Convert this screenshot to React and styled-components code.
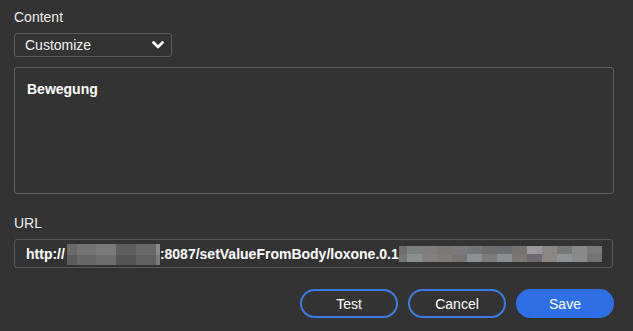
import React from "react";
import styled, { createGlobalStyle } from "styled-components";

const Global = createGlobalStyle`
  html, body { margin: 0; padding: 0; background: #333333; }
  body { font-family: "Liberation Sans", Arial, sans-serif; }
  * { box-sizing: border-box; }
`;

const Page = styled.div`
  width: 633px;
  height: 331px;
  background: #333333;
  padding: 9px 19px 0 14px;
  display: flex;
  flex-direction: column;
`;

const Label = styled.div`
  font-size: 14px;
  line-height: 16px;
  color: #ececec;
  margin-top: ${(p) => p.$top || 0}px;
  margin-bottom: 8px;
`;

const Select = styled.div`
  width: 158px;
  height: 24px;
  border: 1px solid #5c5c5c;
  border-radius: 3px;
  display: flex;
  align-items: center;
  justify-content: space-between;
  padding: 0 7px 0 10px;
  font-size: 14px;
  color: #f2f2f2;
`;

const TextArea = styled.div`
  margin-top: 10px;
  width: 600px;
  height: 127px;
  border: 1px solid #606060;
  border-radius: 3px;
  padding: 13px 12px;
  font-size: 14px;
  line-height: 16px;
  font-weight: bold;
  color: #ffffff;
`;

const Input = styled.div`
  width: 599px;
  height: 29px;
  border: 1px solid #585858;
  border-radius: 3px;
  padding: 0 11px;
  display: flex;
  align-items: center;
  font-size: 14px;
  font-weight: bold;
  color: #ffffff;
  white-space: nowrap;
  overflow: hidden;
`;

const Mosaic = styled.span`
  display: inline-grid;
  grid-template-columns: ${(p) => p.$cols};
  grid-auto-rows: ${(p) => p.$row}px;
  margin: 0 ${(p) => p.$mr || 0}px 0 ${(p) => p.$ml || 0}px;
  align-self: center;
  transform: translateY(${(p) => p.$dy || 0}px);
`;

const Cell = styled.span`
  background: ${(p) => p.$c};
`;

const Buttons = styled.div`
  margin-top: 21px;
  display: flex;
  justify-content: flex-end;
  gap: 10px;
  padding-right: 0;
  width: 600px;
`;

const Button = styled.button`
  width: 98px;
  height: 29px;
  border-radius: 15px;
  border: 2px solid #3a7be4;
  background: ${(p) => (p.$primary ? "#2f6fe6" : "transparent")};
  border-color: ${(p) => (p.$primary ? "#2f6fe6" : "#3a7be4")};
  color: #ffffff;
  font-family: "Liberation Sans", Arial, sans-serif;
  font-size: 14px;
  padding: 0;
  cursor: pointer;
`;

const Chevron = () => (
  <svg width="12" height="8" viewBox="0 0 12 8">
    <polyline
      points="1.5,1.5 6,6 10.5,1.5"
      fill="none"
      stroke="#ffffff"
      strokeWidth="2.6"
      strokeLinecap="round"
      strokeLinejoin="round"
    />
  </svg>
);

const m1Cols = [10, 19, 20, 20, 20, 4];
const m1 = [
  ["#6a6a6a", "#747474", "#7a7a7a", "#5e5e5e", "#686868", "#8a8a8a"],
  ["#5c5c5c", "#666666", "#6e6e6e", "#555555", "#606060", "#7a7a7a"],
];

const m2Cols = [8, 15, 15, 15, 15, 15, 15, 15, 15, 15, 15, 15, 15, 15];
const m2 = [
  ["#6e6e6e", "#7a8080", "#7e7c7c", "#7a7674", "#7a7a7c", "#727476", "#6e6c6c", "#6a6c70", "#747270", "#9a989a", "#8a8684", "#767674", "#86888a", "#7a7a7a"],
  ["#767676", "#8a9090", "#848080", "#7e7c78", "#787474", "#8a9094", "#7e7c7a", "#8a8e8e", "#7a7674", "#6c6a70", "#8a8684", "#8e9496", "#8a8a8a", "#747474"],
];

const renderMosaic = (cols, rows, row, props) => (
  <Mosaic $cols={cols.map((w) => w + "px").join(" ")} $row={row} {...props}>
    {rows.flat().map((c, i) => (
      <Cell key={i} $c={c} />
    ))}
  </Mosaic>
);

export default function App() {
  return (
    <>
      <Global />
      <Page>
        <Label>Content</Label>
        <Select>
          <span>Customize</span>
          <Chevron />
        </Select>
        <TextArea>Bewegung</TextArea>
        <Label $top={21}>URL</Label>
        <Input>
          <span>http://</span>
          {renderMosaic(m1Cols, m1, 10.5, { $ml: 2, $dy: 1 })}
          <span>:8087/setValueFromBody/loxone.0.1</span>
          {renderMosaic(m2Cols, m2, 8, { $dy: 0 })}
        </Input>
        <Buttons>
          <Button>Test</Button>
          <Button>Cancel</Button>
          <Button $primary>Save</Button>
        </Buttons>
      </Page>
    </>
  );
}
